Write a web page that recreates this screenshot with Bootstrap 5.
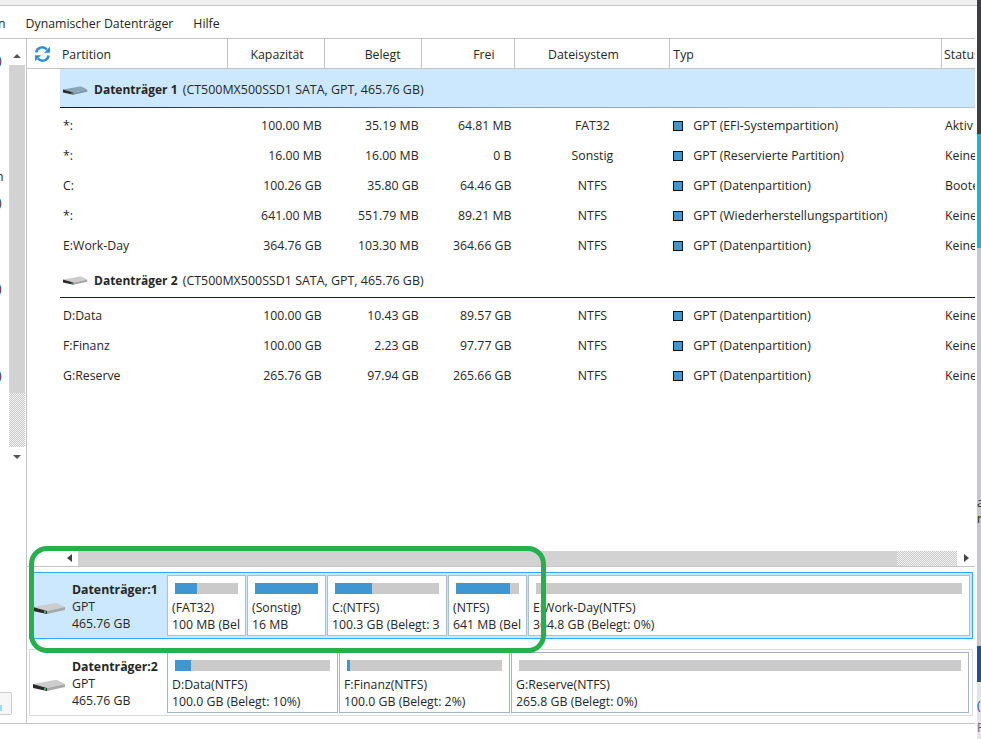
<!DOCTYPE html>
<html lang="de"><head><meta charset="utf-8"><title>Datenträger</title>
<link href="https://cdn.jsdelivr.net/npm/bootstrap@5.3.0/dist/css/bootstrap.min.css" rel="stylesheet">
<style>
html,body{height:739px;overflow:hidden;background:#fff}
body{font-family:"Open Sans","Noto Sans","Liberation Sans",sans-serif;font-size:12.3px;line-height:16px;color:#262626;position:relative;width:981px}
.topstrip{height:6px;background:#f0f0f0;border-bottom:1px solid #c4c4c4;width:977px}
.menubar{height:33px;border-bottom:1px solid #c4c4c4;width:975px;gap:20px;padding-top:3px;overflow:hidden}
.menuclip{margin-left:-2px}
.mainarea{height:685px;width:975px;border-bottom:1px solid #c4c4c4}
.sidepane{width:27px;flex:none;border-right:1px solid #c4c4c4}
.sidetop{height:653px;flex:none}
.glyphcol{width:9px;overflow:hidden;flex:none}
.sideglyph{margin-left:-2px;height:16px}
.sideglyph:nth-child(1){margin-top:14px}
.sideglyph:nth-child(2){margin-top:100px;margin-left:-4px}
.sideglyph:nth-child(3){margin-top:10px}
.sideglyph:nth-child(4){margin-top:70px}
.sideglyph:nth-child(5){margin-top:71px}
.sidetrack{width:16px;flex:none;padding-top:8px}
.scrollarrow{height:18px}
.trackfill{height:328px;background:#d2d2d2}
.trackdots{height:54px;background:repeating-conic-gradient(#c8c8c8 0 25%,#f4f4f4 0 50%) 0 0/2px 2px}
.sidebtn{width:12px;height:23px;border:1px solid #ccc;border-left:0;border-radius:0 2px 2px 0;background:#f7f7f7;padding-top:12px}
.sidemark{width:2px;height:6px;background:#a5d8f5}
.rightpane{width:948px;flex:none}
.headrow{height:30px;border-bottom:1px solid #c4c4c4}
.refreshcell{width:33px;padding:7px 0 0 7px;line-height:0}
.colp{width:168px}.colk{width:97px}.colb{width:97px}.colf{width:93px}.cold{width:156px}.colt{width:272px}.cols{width:33px;white-space:nowrap;overflow:hidden}
.headrow .hcell{height:29px;border-right:1px solid #c4c4c4;line-height:31px;padding:0 3px}
.headrow .hcell:last-child{border-right:0;padding-left:2px;padding-right:0}
.headrow .hcell.colp{padding-left:2px}
.headrow .endcell{text-align:right;padding-right:20px}
.headrow .colf.endcell{padding-right:19px}
.headrow .cold{padding-right:20px;text-align:center}
.datarows{padding-left:33px;height:481px}
.diskhead{height:38px;border-bottom:1px solid #1b1b3a;padding:4px 0 0 3px;gap:6px;margin-bottom:2px;white-space:nowrap}
.diskhead.selhead{height:39px;background:#cce8ff;border-image:linear-gradient(to right,#14143c 0,#8aa0b5 50%,#b8c4d0 100%) 1}
.diskhead b{font-weight:700;font-size:12px}
.diskdescr{font-size:12.45px;margin-left:2px}
.prow{height:30px;line-height:32px;white-space:nowrap}
.prow>div{padding:0 3px;overflow:hidden}
.numcell{text-align:right}
.swatch{width:10px;height:10px;background:#3e96d3;border:1px solid #111;display:inline-block;margin-right:10px;vertical-align:-1px}
.hscroll{height:17px;border-bottom:1px solid #c4c4c4;padding:1px 0 0 33px}
.harrow{width:18px;height:15px;line-height:0;text-align:center;padding-top:3px}
.hthumb{width:819px;height:15px;background:#d2d2d2}
.hdots{width:60px;height:15px;background:repeating-conic-gradient(#c8c8c8 0 25%,#f4f4f4 0 50%) 0 0/2px 2px}
.maprows{padding:5px 0 0 2px;gap:10px}
.maprow{height:67px;width:944px;border:1px solid #d6dae0;padding:2px 0}
.maprow.selrow{background:#cce8ff;border-color:#35a7ff}
.diskinfo{width:137px;flex:none;padding:0 0 0 3px;gap:6px}
.diskinfo svg{margin-top:26px;flex:none}
.infotext{line-height:17px;padding-top:6px;white-space:nowrap}
.partblock{background:#fff;border:1px solid #a5b4cb;padding:7px 0 0 4px;overflow:hidden;white-space:nowrap;height:61px;margin-right:1px;line-height:17px;flex:none}
.selrow .partblock{border-color:#a8c0da}
.usagebar{height:11px;background:#cacaca;margin:0 7px 5px 3px}
.usagefill{height:100%;background:#3e96d3}
.greenring{position:absolute;left:29px;top:546px;width:517px;height:107px;border:5px solid #22b14c;border-radius:18px;pointer-events:none}
.edgestrip{position:absolute;left:977px;top:0;width:4px;height:739px;overflow:hidden;line-height:16px}
.edgedark{height:134px;background:#3a3d4a}
.edgecyan{height:114px;background:#0bbcd6}
.edgegray{height:398px;background:#c5c7d3;padding-top:247px}
.edgeblue{height:36px;background:#1c4f9c}
.edgepale{height:57px;background:#e3e5ec;padding-top:16px;color:#1c4f9c}
.edgegap{margin-top:6px;color:#666}
</style></head><body>
<div class="topstrip"></div>
<div class="menubar d-flex align-items-center"><span class="menuclip">n</span><span>Dynamischer Datenträger</span><span>Hilfe</span></div>
<div class="mainarea d-flex">
 <div class="sidepane d-flex flex-column">
  <div class="sidetop d-flex">
   <div class="glyphcol"><div class="sideglyph">)</div><div class="sideglyph">n</div><div class="sideglyph">)</div><div class="sideglyph">)</div><div class="sideglyph">)</div></div>
   <div class="sidetrack">
    <div class="scrollarrow text-center"><svg width="8" height="18" viewBox="0 0 8 18"><path d="M0 11 4 7l4 4z" fill="#555"/></svg></div>
    <div class="trackfill"></div><div class="trackdots"></div>
    <div class="scrollarrow text-center"><svg width="8" height="18" viewBox="0 0 8 18"><path d="M0 8h8l-4 4z" fill="#555"/></svg></div>
   </div>
  </div>
  <div class="sidebtn"><div class="sidemark"></div></div>
 </div>
 <div class="rightpane d-flex flex-column">
  <div class="headrow d-flex">
   <div class="refreshcell"><svg width="17" height="16" viewBox="0 0 17 16" fill="none" stroke="#2a8de0" stroke-width="2.4"><path d="M2.2 6.5A6 6 0 0 1 12.8 3.6"/><path d="M14.6 9.5A6 6 0 0 1 4 12.4"/><path d="M16 .8v6h-6z" fill="#2a8de0" stroke="none"/><path d="M1 15.2v-6h6z" fill="#2a8de0" stroke="none"/></svg></div>
   <div class="hcell colp">Partition</div><div class="hcell colk endcell">Kapazität</div><div class="hcell colb endcell">Belegt</div><div class="hcell colf endcell">Frei</div><div class="hcell cold">Dateisystem</div><div class="hcell colt">Typ</div><div class="hcell cols">Status:</div>
  </div>
  <div class="datarows" id="rows"></div>
  <div class="hscroll d-flex">
   <div class="harrow"><svg width="5" height="8" viewBox="0 0 5 8"><path d="M5 0v8L0 4z" fill="#444"/></svg></div>
   <div class="hthumb"></div><div class="hdots"></div>
   <div class="harrow"><svg width="5" height="8" viewBox="0 0 5 8"><path d="M0 0v8l5-4z" fill="#444"/></svg></div>
  </div>
  <div class="maprows d-flex flex-column" id="maps"></div>
 </div>
</div>
<div class="greenring"></div>
<div class="edgestrip"><div class="edgedark"></div><div class="edgecyan"></div><div class="edgegray"><div>a</div><div>n</div></div><div class="edgeblue"></div><div class="edgepale"><div>(</div><div class="edgegap">F</div></div></div>
<script>
const hdd=(c,w)=>`<svg width="${w}" height="${w*14/33}" viewBox="0 0 33 14"><path d="M0 6 22 2h2l8 4-18 4z" fill="${c[0]}"/><path d="M0 6l14 4v3L0 10z" fill="#2a2a2a"/><path d="M14 10 32 6v3L14 13z" fill="${c[1]}"/><rect x="11" y="10" width="2" height="2" fill="#3cb371"/></svg>`;
const P=(a,k,b,f,d,t,s)=>`<div class="prow d-flex"><div class="colp">${a}</div><div class="colk numcell">${k}</div><div class="colb numcell">${b}</div><div class="colf numcell">${f}</div><div class="cold text-center">${d}</div><div class="colt"><span class="swatch"></span>${t}</div><div class="cols">${s}</div></div>`;
const H=(n,cl,c)=>`<div class="diskhead d-flex align-items-center ${cl}">${hdd(c,25)}<span><b>Datenträger ${n}</b> <span class="diskdescr">(CT500MX500SSD1 SATA, GPT, 465.76 GB)</span></span></div>`;
document.getElementById('rows').innerHTML=H(1,'selhead',['#8aa5b8','#7d98aa'])+
[['*:','100.00 MB','35.19 MB','64.81 MB','FAT32','GPT (EFI-Systempartition)','Aktiv'],['*:','16.00 MB','16.00 MB','0 B','Sonstig','GPT (Reservierte Partition)','Keine'],['C:','100.26 GB','35.80 GB','64.46 GB','NTFS','GPT (Datenpartition)','Booten'],['*:','641.00 MB','551.79 MB','89.21 MB','NTFS','GPT (Wiederherstellungspartition)','Keine'],['E:Work-Day','364.76 GB','103.30 MB','364.66 GB','NTFS','GPT (Datenpartition)','Keine']].map(r=>P(...r)).join('')+
H(2,'',['#cdcdcd','#a8a8a8'])+
[['D:Data','100.00 GB','10.43 GB','89.57 GB','NTFS','GPT (Datenpartition)','Keine'],['F:Finanz','100.00 GB','2.23 GB','97.77 GB','NTFS','GPT (Datenpartition)','Keine'],['G:Reserve','265.76 GB','97.94 GB','265.66 GB','NTFS','GPT (Datenpartition)','Keine']].map(r=>P(...r)).join('');
const B=(w,p,a,b)=>`<div class="partblock" style="width:${w}px"><div class="usagebar"><div class="usagefill" style="width:${p}%"></div></div><div>${a}</div><div>${b}</div></div>`;
const M=(n,cl,bl)=>`<div class="maprow d-flex ${cl}"><div class="diskinfo d-flex">${hdd(['#cdcdcd','#a8a8a8'],33)}<div class="infotext"><b>Datenträger:${n}</b><br>GPT<br>465.76 GB</div></div>${bl}</div>`;
document.getElementById('maps').innerHTML=M(1,'selrow',B(79,35,'(FAT32)','100 MB (Bel')+B(79,100,'(Sonstig)','16 MB')+B(120,36,'C:(NTFS)','100.3 GB (Belegt: 3')+B(79,86,'(NTFS)','641 MB (Bel')+B(442,0,'E:Work-Day(NTFS)','364.8 GB (Belegt: 0%)'))+
M(2,'',B(171,10,'D:Data(NTFS)','100.0 GB (Belegt: 10%)')+B(171,2,'F:Finanz(NTFS)','100.0 GB (Belegt: 2%)')+B(458,0,'G:Reserve(NTFS)','265.8 GB (Belegt: 0%)'));
</script>
</body></html>
